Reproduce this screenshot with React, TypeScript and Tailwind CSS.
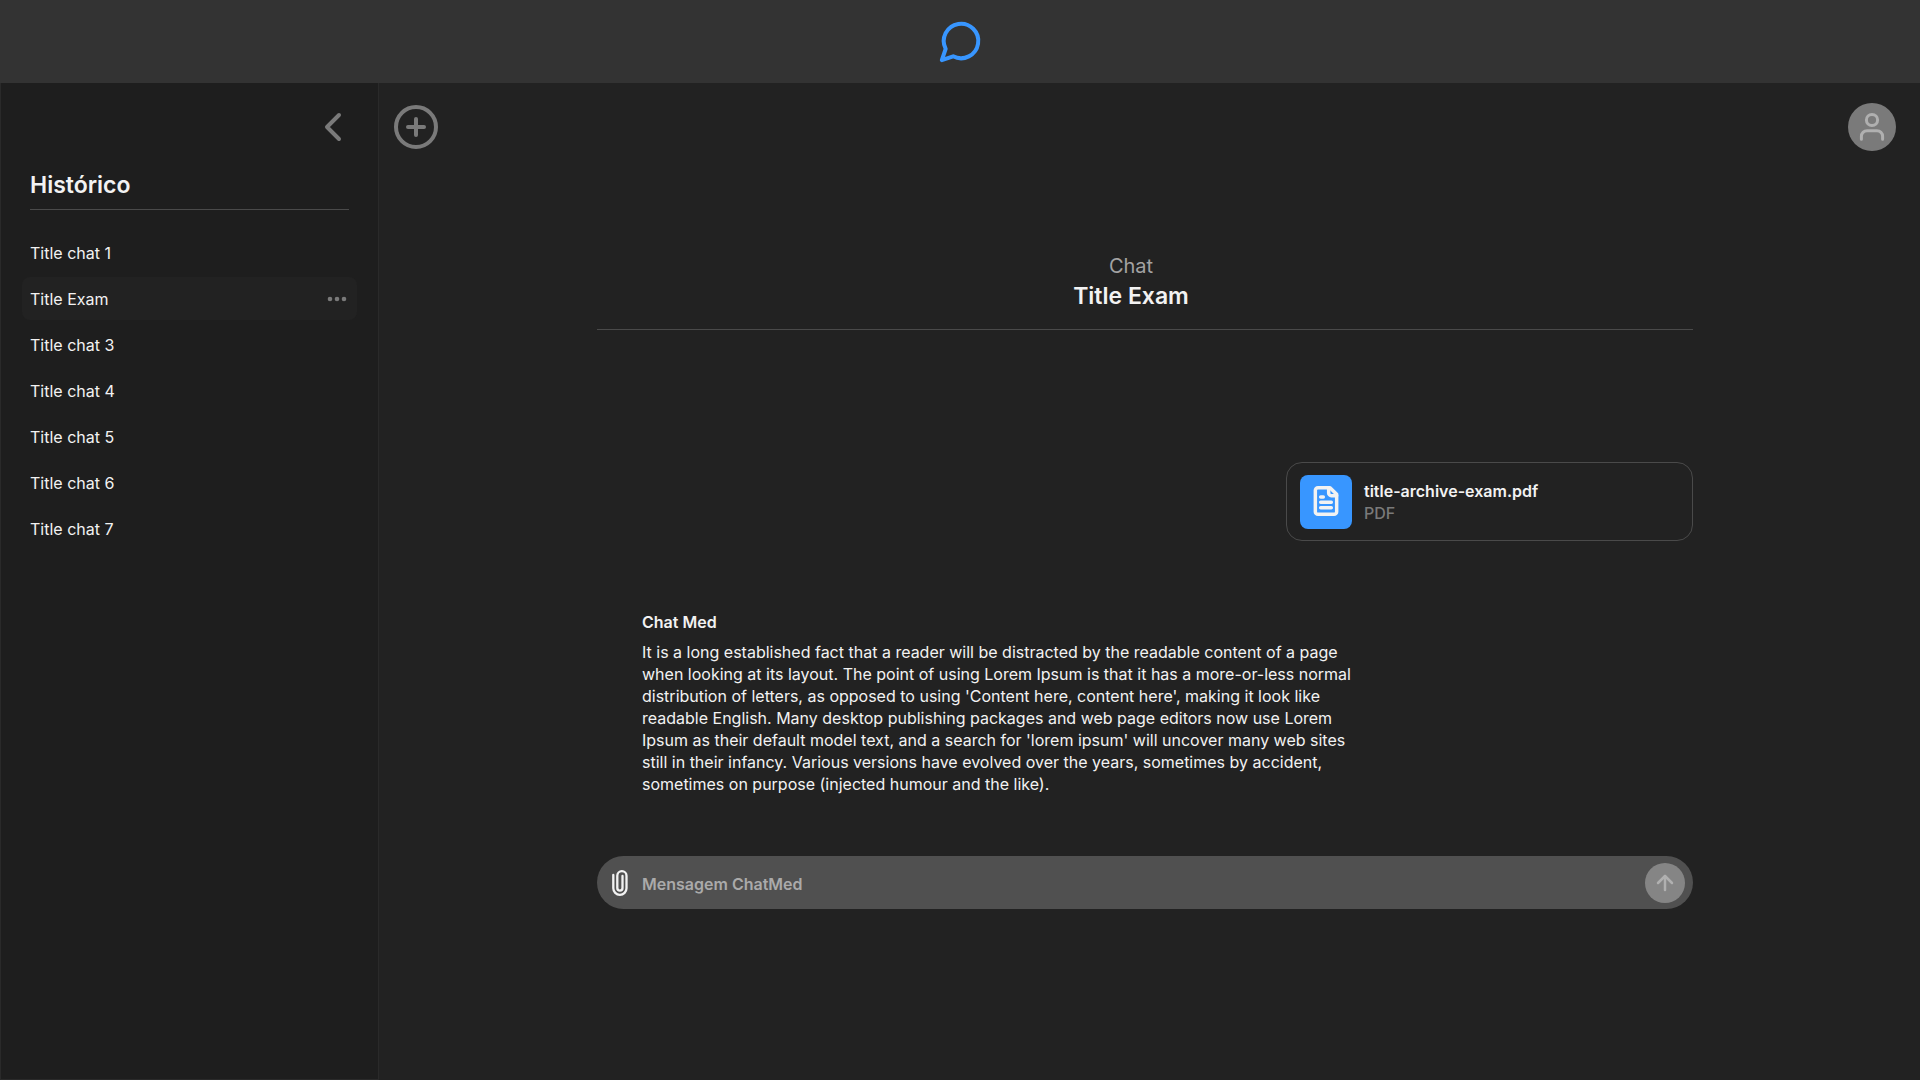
import { ArrowUp, ChevronLeft, CirclePlus } from "lucide-react";

const chats = [
  "Title chat 1",
  "Title Exam",
  "Title chat 3",
  "Title chat 4",
  "Title chat 5",
  "Title chat 6",
  "Title chat 7",
];
const activeChat = 1;

function Logo() {
  return (
    <svg width="46" height="46" viewBox="0 0 24 24" fill="none" stroke="#3896ff" strokeWidth="2.1" strokeLinecap="round" strokeLinejoin="round" aria-hidden="true">
      <path d="M7.9 20A9 9 0 1 0 4 16.1L2 22Z" />
    </svg>
  );
}

function FileIcon() {
  return (
    <svg width="32" height="32" viewBox="0 0 24 24" fill="none" stroke="#f2f2f2" strokeWidth="2.6" strokeLinecap="round" strokeLinejoin="round" aria-hidden="true">
      <path d="M15 2H6a2 2 0 0 0-2 2v16a2 2 0 0 0 2 2h12a2 2 0 0 0 2-2V7Z" />
      <path d="M14 2v4a2 2 0 0 0 2 2h4" />
      <path d="M10 9H8M16 13H8M16 17H8" />
    </svg>
  );
}

function ClipIcon() {
  return (
    <svg width="16" height="26" viewBox="0 0 16 26" fill="none" stroke="#f2f2f2" strokeWidth="2.3" strokeLinecap="round" aria-hidden="true">
      <path d="M1.3 5V18.2a6.6 6.6 0 0 0 13.2 0V5.8a4.6 4.6 0 0 0-9.2 0V18a2.6 2.6 0 0 0 5.2 0V6" />
    </svg>
  );
}

function UserIcon() {
  return (
    <svg width="48" height="48" viewBox="0 0 48 48" fill="none" stroke="#b0b0b0" strokeWidth="3" strokeLinecap="round" aria-hidden="true">
      <circle cx="24" cy="17" r="5.6" />
      <path d="M13.4 36.3v-3a5.6 5.6 0 0 1 5.6-5.6h10a5.6 5.6 0 0 1 5.6 5.6v3" />
    </svg>
  );
}

function DotsIcon() {
  return (
    <svg width="20" height="6" viewBox="0 0 20 6" fill="#7a7a7a" aria-hidden="true">
      <circle cx="3" cy="3" r="2.3" />
      <circle cx="10" cy="3" r="2.3" />
      <circle cx="17" cy="3" r="2.3" />
    </svg>
  );
}

function Sidebar() {
  return (
    <aside className="flex w-[379px] shrink-0 flex-col border border-t-0 border-[#2a2a2a] bg-[#1e1e1e] pt-5">
      <button type="button" aria-label="Recolher" className="mr-[21px] self-end text-[#7a7a7a]">
        <ChevronLeft size={48} strokeWidth={2} />
      </button>
      <h2 className="mx-[29px] mt-[19px] border-b border-[#4a4a4a] pb-[9px] text-[23px] leading-[30px] font-semibold text-[#f2f2f2]">
        Histórico
      </h2>
      <nav className="mx-[21px] mt-[21px] flex flex-col gap-[3px]">
        {chats.map((title, i) => (
          <div
            key={title}
            className={
              i === activeChat
                ? "flex h-[43px] items-center justify-between rounded-lg bg-[#222222] pr-[10px] pl-2"
                : "flex h-[43px] items-center rounded-lg pr-[10px] pl-2"
            }
          >
            <a href="#" className="text-base leading-[22px] text-[#f2f2f2]">{title}</a>
            {i === activeChat && (
              <button type="button" aria-label="Mais opções">
                <DotsIcon />
              </button>
            )}
          </div>
        ))}
      </nav>
    </aside>
  );
}

export default function App() {
  return (
    <div className="flex min-h-screen flex-col bg-[#222222] font-['Inter',sans-serif]">
      <header className="flex h-[83px] items-center justify-center bg-[#333333] pb-[2px] pl-[2px]">
        <Logo />
      </header>
      <div className="flex flex-1">
        <Sidebar />
        <main className="flex min-w-0 flex-1 flex-col pt-5">
          <div className="flex items-center justify-between pr-6 pl-[13px]">
            <button type="button" aria-label="Novo chat" className="text-[#7a7a7a]">
              <CirclePlus size={48} strokeWidth={2} />
            </button>
            <button type="button" aria-label="Perfil" className="size-12 rounded-full bg-[#7a7a7a]">
              <UserIcon />
            </button>
          </div>
          <div className="flex flex-col items-center pt-[100px] pr-[9px]">
            <div className="flex w-full max-w-[1096px] flex-col">
              <div className="border-b border-[#4a4a4a] pr-7 pb-[18px] text-center">
                <p className="text-xl leading-[30px] text-[#a3a3a3]">Chat</p>
                <h1 className="text-[23px] leading-[30px] font-semibold text-[#f2f2f2]">Title Exam</h1>
              </div>
              <div className="mt-[132px] flex h-[79px] w-[407px] items-center gap-3 self-end rounded-2xl border border-[#4a4a4a] px-[13px]">
                <div className="flex h-[54px] w-[52px] items-center justify-center rounded-lg bg-[#3896ff] pb-[2px]">
                  <FileIcon />
                </div>
                <div className="text-base leading-[22px] font-medium">
                  <p className="font-semibold text-[#f2f2f2]">title-archive-exam.pdf</p>
                  <p className="text-[#7a7a7a]">PDF</p>
                </div>
              </div>
              <article className="mt-[70px] ml-[45px] flex max-w-[720px] flex-col gap-2 text-base leading-[22px] text-[#f2f2f2]">
                <h3 className="font-semibold">Chat Med</h3>
                <p>
                  It is a long established fact that a reader will be distracted by the readable content of a page when
                  looking at its layout. The point of using Lorem Ipsum is that it has a more-or-less normal distribution
                  of letters, as opposed to using 'Content here, content here', making it look like readable English. Many
                  desktop publishing packages and web page editors now use Lorem Ipsum as their default model text, and a
                  search for 'lorem ipsum' will uncover many web sites still in their infancy. Various versions have
                  evolved over the years, sometimes by accident, sometimes on purpose (injected humour and the like).
                </p>
              </article>
              <form className="mt-[61px] flex h-[53px] items-center rounded-full bg-[#505050] pr-2 pl-[15px]">
                <button type="button" aria-label="Anexar arquivo">
                  <ClipIcon />
                </button>
                <input
                  type="text"
                  aria-label="Mensagem"
                  placeholder="Mensagem ChatMed"
                  className="ml-[14px] min-w-0 flex-1 bg-transparent pt-[2px] text-base font-semibold text-[#f2f2f2] outline-none placeholder:text-[#aaaaaa]"
                />
                <button type="button" aria-label="Enviar" className="flex size-10 items-center justify-center rounded-full bg-[#858585] text-[#b0b0b0]">
                  <ArrowUp size={24} strokeWidth={2.5} />
                </button>
              </form>
            </div>
          </div>
        </main>
      </div>
    </div>
  );
}
